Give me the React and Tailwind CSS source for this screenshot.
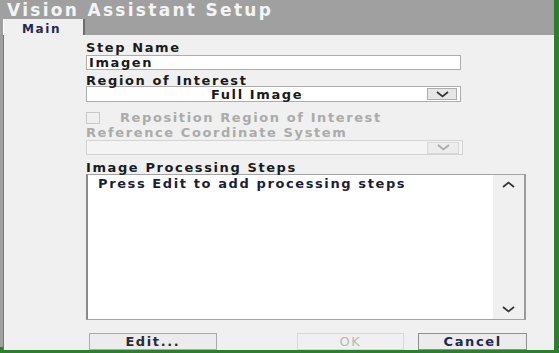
const Chevron = ({ up = false, color = '#333' }) => (
  <svg width="13" height="7" viewBox="0 0 13 7" className="block">
    <path d={up ? 'M1 6 L6.5 1.5 L12 6' : 'M1 1 L6.5 5.5 L12 1'} fill="none" stroke={color} strokeWidth="1.7" />
  </svg>
);

const App = () => {
  return (
    <div className="w-[559px] h-[353px] bg-[#2f7d2f] overflow-hidden font-['DejaVu_Sans',sans-serif] font-bold">
      <div className="w-[554px] h-[347px] bg-[#a0a0a0] flex flex-col">
        {/* title bar */}
        <div className="h-[24px] pl-[7px] pt-[1px] text-[17px] leading-[18px] text-[#f4f4f4] tracking-[2.3px] whitespace-nowrap">
          Vision Assistant Setup
        </div>
        {/* tab strip */}
        <div className="h-[17px] flex">
          <div className="ml-[3px] w-[82px] bg-[#f0f0f0] border-l border-l-white border-r-2 border-r-[#6e6e6e] pl-[18px] pt-[4px] text-[12px] leading-[12px] tracking-[1.6px] text-[#1e2a5a]">
            Main
          </div>
        </div>
        {/* panel */}
        <div className="flex-1 ml-[3px] border-l border-[#777] bg-[#f0f0f0] pl-[82px] pr-[27px] pt-[6px] text-[13px] leading-[13px] tracking-[1.6px] text-[#1b1b1b] whitespace-nowrap">
          <div className="h-[13px]">Step Name</div>
          <div className="mt-[1px] w-[375px] h-[15px] bg-white border border-[#adadad] pl-[2px] leading-[13px]">Imagen</div>
          <div className="mt-[4px] h-[13px]">Region of Interest</div>
          <div className="mt-[-1px] w-[375px] h-[16px] bg-white border border-[#adadad] flex items-center">
            <div className="flex-1 text-center">Full Image</div>
            <div className="w-[30px] h-[12px] mr-[3px] bg-[#e6e6e6] border border-[#adadad] flex items-center justify-center">
              <Chevron />
            </div>
          </div>
          <div className="mt-[9px] flex items-center h-[13px] text-[#ababab]">
            <div className="w-[14px] h-[12px] border border-[#c8c8c8] bg-[#f0f0f0] mr-[20px]" />
            <span>Reposition Region of Interest</span>
          </div>
          <div className="mt-[2px] h-[13px] text-[#ababab]">Reference Coordinate System</div>
          <div className="mt-[1px] w-[377px] h-[15px] bg-[#f4f4f4] border border-[#d4d4d4] flex items-center justify-end">
            <div className="w-[32px] h-[12px] mr-[3px] bg-[#ececec] border border-[#d8d8d8] flex items-center justify-center">
              <Chevron color="#aaa" />
            </div>
          </div>
          <div className="mt-[6px] h-[13px]">Image Processing Steps</div>
          <div className="w-[440px] h-[146px] bg-white border border-[#a3a3a3] border-l-2 border-l-[#8a8a8a] border-r-2 border-r-[#9a9a9a] flex">
            <div className="flex-1 pl-[10px] pt-[2px] text-[#1a1f3a]">Press Edit to add processing steps</div>
            <div className="w-[31px] bg-[#f0f0f0] flex flex-col items-center justify-between py-[6px]">
              <Chevron up />
              <Chevron />
            </div>
          </div>
          <div className="mt-[13px] flex h-[17px]">
            <div className="ml-[3px] w-[128px] bg-[#ececec] border border-[#acacac] text-center leading-[15px] text-[#2a2a3a]">Edit...</div>
            <div className="ml-[80px] w-[108px] bg-[#f0f0f0] border border-[#d8d8d8] text-center leading-[15px] text-[#b8b8b8] font-normal">OK</div>
            <div className="ml-[14px] w-[109px] bg-[#ececec] border border-[#8f8f8f] text-center leading-[15px] text-[#1e2a4a]">Cancel</div>
          </div>
        </div>
      </div>
    </div>
  );
};

export default App;
